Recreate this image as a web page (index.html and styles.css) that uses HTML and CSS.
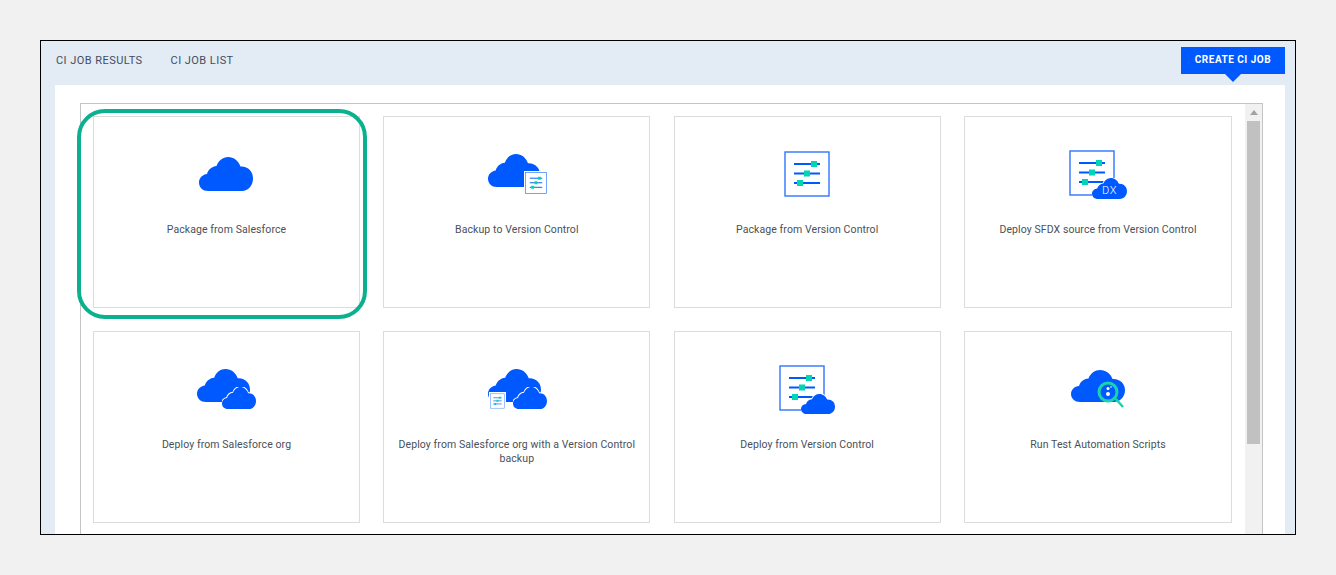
FILE: index.html
```html
<!DOCTYPE html>
<html lang="en">
<head>
    <meta charset="UTF-8">
    <title>CI Jobs</title>
    <link rel="stylesheet" href="styles.css">
</head>
<body>
    <!-- shared icon parts -->
    <svg class="defs">
        <symbol id="cloud" viewBox="0 0 54 34" preserveAspectRatio="none">
            <path d="M9 34C4 34 0 30.5 0 25.5C0 21 3.5 17.5 8 17C9 13 12.5 9.5 17.5 9C19.5 3.5 24 0 29 0C35 0 39.5 4 41.5 9.5C49 9 54 14.5 54 21.5C54 28.5 49 34 43 34Z"/>
        </symbol>
        <symbol id="sheet" viewBox="0 0 46 46">
            <rect x="1" y="1" width="44" height="44" fill="#fff" stroke="#2f76ff" stroke-width="1.4"/>
            <path d="M10 13H36M10 22.5H36M10 32H36" stroke="#0059ff" stroke-width="2"/>
            <path d="M27 10h6v6h-6zM20 19.500h6v6h-6zM13 29h6v6h-6z" fill="#00d6b4"/>
        </symbol>
    </svg>

    <div class="frame">
        <div class="header">
            <ul class="tabs">
                <li class="tab">CI Job Results</li>
                <li class="tab">CI Job List</li>
            </ul>
            <button type="button" class="createBtn">Create CI Job</button>
        </div>

        <div class="panel">
            <div class="listBox">
                <div class="cards">
                    <div class="card selected">
                        <div class="icon">
                            <svg width="55" height="34"><use href="#cloud" width="54" height="34" class="blue"/></svg>
                        </div>
                        <p class="name">Package from Salesforce</p>
                    </div>
                    <div class="card">
                        <div class="icon">
                            <svg width="57" height="40">
                                <use href="#cloud" width="52" height="33" class="blue"/>
                                <rect x="36" y="17" width="24" height="24" fill="#fff"/>
                                <use href="#sheet" x="37" y="18" width="22" height="22"/>
                            </svg>
                        </div>
                        <p class="name">Backup to Version Control</p>
                    </div>
                    <div class="card">
                        <div class="icon">
                            <svg width="46" height="46"><use href="#sheet" width="46" height="46"/></svg>
                        </div>
                        <p class="name">Package from Version Control</p>
                    </div>
                    <div class="card">
                        <div class="icon">
                            <svg width="58" height="49">
                                <use href="#sheet" width="46" height="46"/>
                                <use href="#cloud" x="23" y="28" width="35" height="21" class="blue haloed"/>
                                <text x="40.500" y="43.500" class="dx">DX</text>
                            </svg>
                        </div>
                        <p class="name">Deploy SFDX source from Version Control</p>
                    </div>
                    <div class="card">
                        <div class="icon">
                            <svg width="59" height="40">
                                <use href="#cloud" width="53" height="33" class="blue"/>
                                <use href="#cloud" x="25" y="18" width="34" height="22" class="blue haloed"/>
                            </svg>
                        </div>
                        <p class="name">Deploy from Salesforce org</p>
                    </div>
                    <div class="card">
                        <div class="icon">
                            <svg width="57" height="40">
                                <use href="#cloud" width="53" height="33" class="blue"/>
                                <use href="#cloud" x="25" y="18" width="34" height="22" class="blue haloed"/>
                                <rect x="1" y="23" width="17" height="17" fill="#fff"/>
                                <use href="#sheet" x="2" y="24" width="15" height="16"/>
                            </svg>
                        </div>
                        <p class="name">Deploy from Salesforce org with a Version Control backup</p>
                    </div>
                    <div class="card">
                        <div class="icon">
                            <svg width="56" height="49">
                                <use href="#sheet" width="46" height="46"/>
                                <use href="#cloud" x="22" y="29" width="34" height="20" class="blue haloed"/>
                            </svg>
                        </div>
                        <p class="name">Deploy from Version Control</p>
                    </div>
                    <div class="card">
                        <div class="icon">
                            <svg width="54" height="38">
                                <use href="#cloud" width="54" height="32" class="blue"/>
                                <path d="M44 28L52 37" stroke="#17d4ae" stroke-width="2.500"/>
                                <circle cx="37" cy="22" r="9" fill="#0059ff" stroke="#17d4ae" stroke-width="3"/>
                                <circle cx="37" cy="24" r="2" fill="#fff"/>
                                <circle cx="37" cy="18.500" r="1.500" fill="#fff"/>
                                <circle cx="40" cy="17" r="0.800" fill="#fff"/>
                            </svg>
                        </div>
                        <p class="name">Run Test Automation Scripts</p>
                    </div>
                </div>
                <!-- scrollbar -->
                <div class="scrollBar">
                    <span class="scrollUp"></span>
                    <div class="scrollThumb"></div>
                </div>
            </div>
        </div>
    </div>
</body>
</html>
```

FILE: styles.css
```css
html, body{
    margin: 0;
    height: 100%;
}
body{
    background-color: #f1f1f1;
    font-family: "Roboto", "Liberation Sans", sans-serif;
    padding: 40px;
    box-sizing: border-box;
}
.defs{
    display: none;
}
.blue{
    fill: #0059ff;
}
.haloed{
    stroke: #fff;
    stroke-width: 3px;
    paint-order: stroke;
    vector-effect: non-scaling-stroke;
}
.dx{
    fill: #fff;
    font-family: "Roboto", sans-serif;
    font-size: 11px;
    font-weight: 300;
    letter-spacing: 0.5px;
    text-anchor: middle;
}

/* outer frame */
.frame{
    width: 1256px;
    height: 495px;
    box-sizing: border-box;
    border: 1px solid #000;
    background-color: #e3ebf4;
    overflow: hidden;
}

/* top bar */
.header{
    height: 44px;
    display: flex;
    justify-content: space-between;
    align-items: flex-start;
    padding: 6px 10px 0 15px;
    box-sizing: border-box;
}
.tabs{
    list-style: none;
    margin: 0;
    padding: 0;
    display: flex;
    gap: 28px;
}
.tab{
    color: #3f4e63;
    font-size: 11px;
    line-height: 27px;
    letter-spacing: 0.45px;
    text-transform: uppercase;
}
.createBtn{
    position: relative;
    width: 104px;
    height: 27px;
    border: none;
    padding: 0 0 2px;
    background-color: #0059ff;
    color: #fff;
    font-family: inherit;
    font-size: 10px;
    font-weight: 700;
    letter-spacing: 0.5px;
    text-transform: uppercase;
}
.createBtn::after{
    content: "";
    position: absolute;
    left: 44px;
    top: 27px;
    border-style: solid;
    border-width: 8px 8px 0 8px;
    border-color: #0059ff transparent transparent transparent;
}

/* white area */
.panel{
    height: 450px;
    margin: 0 10px 0 14px;
    padding: 18px 22px 0 25px;
    background-color: #fff;
}
.listBox{
    display: flex;
    height: 500px;
    box-sizing: border-box;
    border: 1px solid #c4c4c4;
}
.cards{
    width: 1139px;
    margin: 12px 13px 0 12px;
    display: grid;
    grid-template-columns: repeat(3, 267px) 268px;
    grid-auto-rows: 192px;
    column-gap: 23.33px;
    row-gap: 23px;
}
.card{
    position: relative;
    box-sizing: border-box;
    border: 1px solid #dcdcdc;
    padding: 0 10px;
    text-align: center;
}
/* green highlight round the first card */
.card.selected::after{
    content: "";
    position: absolute;
    left: -17px;
    top: -8px;
    width: 282px;
    height: 202px;
    border: 4px solid #0bb08f;
    border-radius: 28px;
}
.icon{
    height: 80px;
    margin-top: 17px;
    display: flex;
    align-items: center;
    justify-content: center;
}
.icon svg{
    display: block;
    overflow: visible;
}
.name{
    margin: 9px 0 0;
    color: #4a5058;
    font-size: 10.5px;
    line-height: 14px;
    letter-spacing: 0.09px;
}

/* scrollbar */
.scrollBar{
    width: 17px;
    background-color: #f1f1f1;
    display: flex;
    flex-direction: column;
    align-items: center;
}
.scrollUp{
    margin-top: 6px;
    width: 0;
    height: 0;
    border-style: solid;
    border-width: 0 4px 5px 4px;
    border-color: transparent transparent #a3a3a3 transparent;
}
.scrollThumb{
    width: 13px;
    height: 323px;
    margin-top: 6px;
    background-color: #c1c1c1;
}
```
